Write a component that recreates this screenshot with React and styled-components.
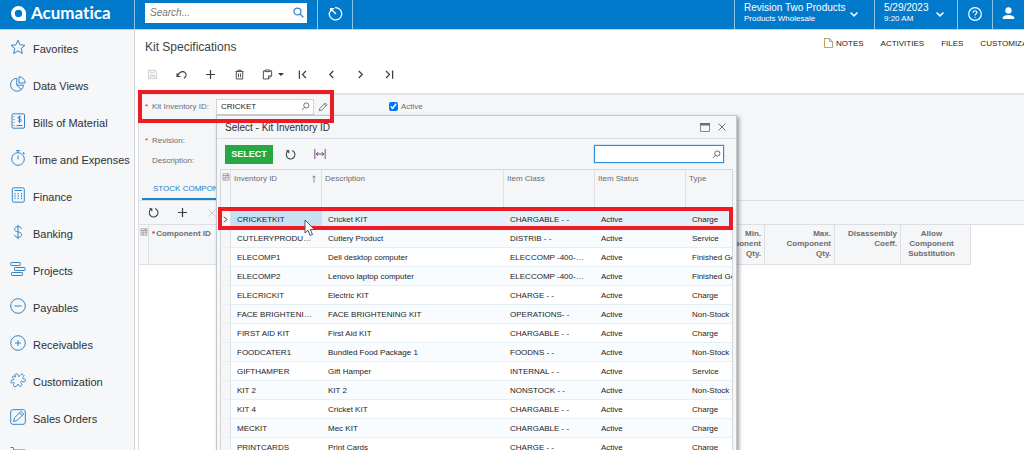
import React from 'react'
import styled, { createGlobalStyle } from 'styled-components'

const menuItems = [
   { label: 'Favorites', icon: 'star' },
   { label: 'Data Views', icon: 'pie' },
   { label: 'Bills of Material', icon: 'bill' },
   { label: 'Time and Expenses', icon: 'timer' },
   { label: 'Finance', icon: 'calculator' },
   { label: 'Banking', icon: 'dollar' },
   { label: 'Projects', icon: 'projects' },
   { label: 'Payables', icon: 'minusCircle' },
   { label: 'Receivables', icon: 'plusCircle' },
   { label: 'Customization', icon: 'puzzle' },
   { label: 'Sales Orders', icon: 'editSquare' },
   { label: '', icon: 'cart' },
]

const kits = [
   ['CRICKETKIT', 'Cricket KIT', 'CHARGABLE - -', 'Active', 'Charge'],
   ['CUTLERYPRODUCT01', 'Cutlery Product', 'DISTRIB - -', 'Active', 'Service'],
   ['ELECOMP1', 'Dell desktop computer', 'ELECCOMP -400-COMP', 'Active', 'Finished Good'],
   ['ELECOMP2', 'Lenovo laptop computer', 'ELECCOMP -400-COMP', 'Active', 'Finished Good'],
   ['ELECRICKIT', 'Electric KIT', 'CHARGE - -', 'Active', 'Charge'],
   ['FACE BRIGHTENING KIT', 'FACE BRIGHTENING KIT', 'OPERATIONS- -', 'Active', 'Non-Stock Item'],
   ['FIRST AID KIT', 'First Aid KIT', 'CHARGABLE - -', 'Active', 'Charge'],
   ['FOODCATER1', 'Bundled Food Package 1', 'FOODNS - -', 'Active', 'Non-Stock Item'],
   ['GIFTHAMPER', 'Gift Hamper', 'INTERNAL - -', 'Active', 'Service'],
   ['KIT 2', 'KIT 2', 'NONSTOCK - -', 'Active', 'Non-Stock Item'],
   ['KIT 4', 'Cricket KIT', 'CHARGABLE - -', 'Active', 'Charge'],
   ['MECKIT', 'Mec KIT', 'CHARGABLE - -', 'Active', 'Charge'],
   ['PRINTCARDS', 'Print Cards', 'CHARGE - -', 'Active', 'Charge'],
]

const shapes = {
   star: <path d="M8 1.2l2 4.6 5 .5-3.800 3.300 1.200 4.900L8 11.900l-4.400 2.600 1.200-4.900L1 6.300l5-.5z" />,
   pie: <><path d="M6.800 2.200A6.500 6.500 0 1 0 13.500 9.200H6.800zM6.800 9.200l4.700 4.600" /><path d="M9 .8A6.200 6.200 0 0 1 15.200 7H9z" /></>,
   bill: (
      <>
         <rect x="2" y=".8" width="12.500" height="14.400" rx="1.200" />
         <path d="M4 3v1M4 6v1M4 9v1M4 12v1M6.500 12.500h6" />
         <path d="M11.200 4.300c-.8-1-3.400-.9-3.400.5 0 1.600 3.600.8 3.600 2.500 0 1.500-2.800 1.600-3.700.4M9.500 2.500v7.500" />
      </>
   ),
   timer: <><circle cx="8" cy="9" r="6.300" /><path d="M8 2.700V.7M6 .7h4M8 5.500v4M12.700 4.300l1.300-1.300M13 2.200l1.800 1.600" /></>,
   calculator: (
      <>
         <rect x="2.300" y=".8" width="12" height="14.400" rx="1.500" />
         <path d="M5 6v7M8.200 6v7M11.500 6v7" strokeDasharray="1.500 .8" />
         <path d="M4.500 3.500h7.600" />
      </>
   ),
   dollar: <><path d="M11.500 5C11 3 9.800 2.700 8 2.700 6 2.700 4.600 3.700 4.600 5.200c0 3.700 7 1.800 7 5.500 0 1.600-1.500 2.600-3.500 2.600S4.700 12.500 4.300 10.700" /><path d="M8 .8v14.400" /></>,
   projects: <><rect x=".8" y="1.500" width="9.500" height="3" rx=".6" /><rect x="4.500" y="6.500" width="10.500" height="3" rx=".6" /><rect x="1.500" y="11.500" width="11" height="3" rx=".6" /></>,
   minusCircle: <><circle cx="8" cy="8" r="7.300" /><path d="M4.300 8h7.400" /></>,
   plusCircle: <><circle cx="8" cy="8" r="7.300" /><path d="M5 8h6M8 5v6" /></>,
   puzzle: <path d="M5.500 5C4 3 6 .8 7.600 2.200c.9.900.2 1.800.9 2.300.8.500 1.700-1.300 2.500-2 1-.8 2.300.1 3.200 1.300-.8 1.200-2 1.500-1.500 2.500.5.800 2 0 2.600 1.200.7 1.600-1 3.300-2.500 2.200-.9-.7-1.500-.9-2 0-.4.900.8 1.500 1.200 2.500.3.900-.7 2-1.800 2.300-1.500-.2-1.100-2.200-2.200-2.200-1 .1-.8 1.600-2 2.300-1.400.7-3-.7-2.400-2.200.3-.8 1-1.300.3-1.900-.8-.5-1.500.6-2.300.6C.8 10.800.7 9.600 1.200 8.700c.8-1.200 2.200-.5 2.500-1.400C4 6.300 2.300 6 2.500 4.800c.5-1.200 2-.7 3 .2z" />,
   editSquare: <><rect x=".7" y=".7" width="14.600" height="14.600" rx="2.200" /><path d="M3.500 12.500l1-3.700 6.500-6.500 2.700 2.700-6.500 6.500zM9.500 3.800l2.700 2.700" /></>,
   cart: <><path d="M.5 1.500h2.800L5.500 10h8L15.300 4H4" /><circle cx="6.500" cy="13.500" r="1.300" /><circle cx="12.500" cy="13.500" r="1.300" /></>,
   search: <><circle cx="6.500" cy="6.500" r="5" /><path d="M10 10l5 5" /></>,
   find: <><circle cx="9.500" cy="6.200" r="4.600" /><path d="M6.200 9.500L1.500 14.200" /></>,
   history: <path d="M7.500 1.700A6.600 6.600 0 1 1 1.800 6M8.500 8.500L3.500 3.500M2.800 6.500V2.800h3.700" />,
   chevronDown: <path d="M2.500 5.500L8 11l5.500-5.500" />,
   help: <><circle cx="8" cy="8" r="7.200" /><path d="M5.800 6.500c0-3 4.400-2.800 4.400-.3C10.200 7.800 8 7.900 8 9.700M8 11v1.300" /></>,
   save: <><path d="M2 2h10l2 2v10H2zM5 2v3.500h6V2M4.500 14V9h7v5M6 11h4" /></>,
   undo: <path d="M1.500 6v5h5M2 10.500C4 6 7 3.500 10.500 3.800c3.500.5 5 4 3.500 7-.5 1-1.500 2-2.500 2.500" />,
   plus: <path d="M8 1.500v13M1.500 8h13" />,
   trash: <path d="M2.200 3.700h11.600M5.700 3.500V1.800h4.600v1.700M3.300 4v10.500h9.400V4M6.500 6.500V12M9.500 6.500V12" />,
   clipboard: <path d="M4.500 2.800H2v11.700h7.500l4.500-4.500V2.800h-2.500M4.500 1.500h7v2.300h-7zM9.500 14.500V10H14" />,
   first: <path d="M3.500 2v12M13 3L8 8l5 5" />,
   last: <path d="M12.500 2v12M3 3l5 5-5 5" />,
   prev: <path d="M10.500 3l-5 5 5 5" />,
   next: <path d="M5.500 3l5 5-5 5" />,
   pencil: <path d="M2 14l1-4L11.500 1.500l3 3L6 13zM9.800 3.200l3 3" />,
   refresh: <path d="M10.500 2.300A6.300 6.300 0 1 1 4.300 3.200M2 2.500h3.500V6" />,
   close: <path d="M2.500 2.500l11 11M13.500 2.500l-11 11" />,
   grid: <path d="M2 1.500h12v13H2zM2 5h12M2 10h12M6.500 5v9M10.500 1.500V10" />,
   up: <path d="M8 15V2M5 5l3-3.500L11 5" />,
}

function Icon({ name, size = 16, weight = 1 }) {
   return (
      <svg width={size} height={size} viewBox="0 0 16 16" fill="none" stroke="currentColor" strokeWidth={weight} aria-hidden="true">
         {shapes[name]}
      </svg>
   )
}

function Header() {
   return (
      <TopBar>
         <Brand href="#home">
            <svg width="15" height="15" viewBox="0 0 16 16" fill="#fff" aria-hidden="true">
               <path fillRule="evenodd" d="M8 0a8 8 0 1 0 0 16h6.500a1.500 1.500 0 0 0 1.500-1.500V8a8 8 0 0 0-8-8zm0 4a3.900 3.900 0 1 1 0 7.800A3.900 3.900 0 0 1 8 4z" />
            </svg>
            Acumatica
         </Brand>
         <SearchCell>
            <SearchBox>
               <input type="text" placeholder="Search..." aria-label="Search" />
               <Icon name="search" size={11} weight={1.800} />
            </SearchBox>
         </SearchCell>
         <BarButton $width={35} aria-label="Recent"><Icon name="history" weight={1.400} size={15} /></BarButton>
         <BarFill />
         <BarMenu $width={140} $end={15}>
            <BarText>
               <b>Revision Two Products</b>
               <span>Products Wholesale</span>
            </BarText>
            <Icon name="chevronDown" size={10} weight={2.400} />
         </BarMenu>
         <BarMenu $width={83} $end={12}>
            <BarText>
               <b>5/29/2023</b>
               <span>9:20 AM</span>
            </BarText>
            <Icon name="chevronDown" size={10} weight={2.400} />
         </BarMenu>
         <BarButton $width={35} aria-label="Help"><Icon name="help" size={14} weight={1.400} /></BarButton>
         <BarButton $width={32} aria-label="User">
            <svg width="13" height="13" viewBox="0 0 14 14" fill="#fff" aria-hidden="true">
               <circle cx="7" cy="3.800" r="3.400" />
               <path d="M.8 13v-1.700C1 9.500 3.800 8.600 7 8.600s6 .9 6.200 2.700V13z" />
            </svg>
         </BarButton>
      </TopBar>
   )
}

function KitDialog() {
   return (
      <Dialog role="dialog" aria-labelledby="dialog-title">
         <DialogTitle>
            <h2 id="dialog-title">Select - Kit Inventory ID</h2>
            <ToolButton aria-label="Maximize">
               <svg width="10" height="9" viewBox="0 0 10 9" aria-hidden="true">
                  <path d="M.5 1h9v7.500h-9z" fill="none" stroke="#85888c" />
                  <path d="M0 0h10v2.500H0z" fill="#6b6e72" />
               </svg>
            </ToolButton>
            <ToolButton aria-label="Close"><Icon name="close" size={10} weight={1.600} /></ToolButton>
         </DialogTitle>
         <DialogTools>
            <SelectButton>SELECT</SelectButton>
            <ToolButton aria-label="Refresh" $dark><Icon name="refresh" size={11} weight={1.500} /></ToolButton>
            <ToolButton aria-label="Fit to screen" $dark>
               <svg width="12" height="10" viewBox="0 0 12 10" fill="none" aria-hidden="true">
                  <path d="M.8 0v10M11.200 0v10" stroke="#9b5fa8" strokeWidth="1.200" />
                  <path d="M2 5h8M4 3.200L2.200 5 4 6.800M8 3.200L9.800 5 8 6.800" stroke="#55585c" />
               </svg>
            </ToolButton>
            <Spacer />
            <DialogSearch>
               <input type="text" aria-label="Find kit" />
               <Icon name="find" size={9} weight={1.600} />
            </DialogSearch>
         </DialogTools>
         <GridFrame>
            <KitTable>
               <colgroup>
                  <Col $w={10} />
                  <Col $w={91} />
                  <Col $w={182} />
                  <Col $w={91} />
                  <Col $w={91} />
                  <Col $w={91} />
               </colgroup>
               <thead>
                  <tr>
                     <th aria-label="Settings"><Icon name="grid" size={8} /></th>
                     <th><Sorted>Inventory ID <Icon name="up" size={8} weight={1.500} /></Sorted></th>
                     <th>Description</th>
                     <th>Item Class</th>
                     <th>Item Status</th>
                     <th>Type</th>
                  </tr>
               </thead>
               <tbody>
                  {kits.map((kit, i) => (
                     <KitRow key={kit[0]} $selected={i === 0}>
                        <td>{i === 0 && <Icon name="next" size={9} weight={1.600} />}</td>
                        {kit.map((value, n) => <td key={n}>{value}</td>)}
                     </KitRow>
                  ))}
               </tbody>
            </KitTable>
         </GridFrame>
         <RowMark />
         <Pointer width="12" height="18" viewBox="0 0 12 18" aria-hidden="true">
            <path d="M1 1v13l3-2.700L6 16.500l2.500-1L6.300 10.500H10.500z" fill="#fff" stroke="#555" />
         </Pointer>
      </Dialog>
   )
}

function App() {
   return (
      <Page>
         <GlobalStyle />
         <Header />
         <Body>
            <Sidebar>
               {menuItems.map(item => (
                  <SideLink href="#menu" key={item.icon} aria-label={item.label || 'Purchases'}>
                     <Icon name={item.icon} />
                     {item.label}
                  </SideLink>
               ))}
            </Sidebar>
            <Main>
               <TitleRow>
                  <h1>Kit Specifications</h1>
                  <PageLinks>
                     <a href="#notes">
                        <svg width="9" height="10" viewBox="0 0 9 10" fill="none" aria-hidden="true">
                           <path d="M.5 9.500V.5h5L8.500 3.500v6z" stroke="#a9a49a" />
                           <path d="M.5 0v9.500M5.500.5v3h3" stroke="#c7a05a" />
                        </svg>
                        NOTES
                     </a>
                     <a href="#activities">ACTIVITIES</a>
                     <a href="#files">FILES</a>
                     <a href="#customization">CUSTOMIZATION</a>
                  </PageLinks>
               </TitleRow>
               <Toolbar>
                  <ToolButton aria-label="Save" disabled><Icon name="save" size={11} weight={1.200} /></ToolButton>
                  <ToolButton aria-label="Undo" $dark><Icon name="undo" size={11} weight={1.600} /></ToolButton>
                  <ToolButton aria-label="Add" $dark><Icon name="plus" size={11} weight={1.800} /></ToolButton>
                  <ToolButton aria-label="Delete" $dark><Icon name="trash" size={11} weight={1.300} /></ToolButton>
                  <ClipboardButton aria-label="Clipboard" $dark>
                     <Icon name="clipboard" size={11} weight={1.300} />
                     <Caret />
                  </ClipboardButton>
                  <ToolButton aria-label="First" $dark><Icon name="first" size={11} weight={1.800} /></ToolButton>
                  <ToolButton aria-label="Previous" $dark><Icon name="prev" size={11} weight={1.800} /></ToolButton>
                  <ToolButton aria-label="Next" $dark><Icon name="next" size={11} weight={1.800} /></ToolButton>
                  <ToolButton aria-label="Last" $dark><Icon name="last" size={11} weight={1.800} /></ToolButton>
               </Toolbar>
               <Content>
                  <Form>
                     <KitField>
                        <Label htmlFor="kit" $required>Kit Inventory ID:</Label>
                        <Lookup>
                           <input id="kit" type="text" defaultValue="CRICKET" />
                           <Icon name="find" size={9} weight={1.500} />
                        </Lookup>
                        <ToolButton aria-label="Edit"><Icon name="pencil" size={10} weight={1.400} /></ToolButton>
                        <FieldMark />
                     </KitField>
                     <ActiveLabel>
                        <input type="checkbox" defaultChecked />
                        Active
                     </ActiveLabel>
                     <Label as="span" $required>Revision:</Label>
                     <Label as="span">Description:</Label>
                  </Form>
                  <Tabs>
                     <button>STOCK COMPONENTS</button>
                  </Tabs>
                  <GridTools>
                     <ToolButton aria-label="Refresh" $dark><Icon name="refresh" size={11} weight={1.500} /></ToolButton>
                     <ToolButton aria-label="Add row" $dark><Icon name="plus" size={11} weight={1.800} /></ToolButton>
                     <ToolButton aria-label="Delete row" disabled><Icon name="close" size={10} weight={1.400} /></ToolButton>
                  </GridTools>
                  <ComponentTable>
                     <colgroup>
                        <Col $w={10} />
                        <Col $w={550} />
                        <Col $w={66} />
                        <Col $w={70} />
                        <Col $w={66} />
                        <Col $w={70} />
                     </colgroup>
                     <thead>
                        <tr>
                           <th aria-label="Settings"><Icon name="grid" size={8} /></th>
                           <th><i>*</i>Component ID</th>
                           <Num>Min. Component Qty.</Num>
                           <Num>Max.<br />Component<br />Qty.</Num>
                           <Num>Disassembly Coeff.</Num>
                           <Mid>Allow Component Substitution</Mid>
                        </tr>
                     </thead>
                  </ComponentTable>
               </Content>
               <KitDialog />
            </Main>
         </Body>
      </Page>
   )
}

const GlobalStyle = createGlobalStyle`
   * {
      box-sizing: border-box;
   }

   body {
      margin: 0;
      overflow: hidden;
      background: #fff;
      color: #3c3f43;
      font-family: 'Liberation Sans', Arial, sans-serif;
      font-size: 8px;
   }

   button, input {
      font: inherit;
      color: inherit;
      margin: 0;
      padding: 0;
      border: 0;
      background: none;
   }

   input {
      outline: none;
      min-width: 0;
   }

   a {
      color: inherit;
      text-decoration: none;
   }

   h1, h2 {
      margin: 0;
      font-weight: 400;
   }

   svg {
      flex: none;
      display: block;
   }
`

const Page = styled.div`
   display: flex;
   flex-direction: column;
   height: 100vh;
   overflow: hidden;
`

const TopBar = styled.header`
   display: flex;
   flex: none;
   height: 30px;
   background: #027acc;
   border-bottom: 1px solid #b9d3e8;
   color: #fff;
`

const Brand = styled.a`
   display: flex;
   align-items: center;
   gap: 5px;
   width: 134px;
   padding: 0 0 3px 11px;
   font-family: Lato, 'Open Sans', sans-serif;
   font-size: 17px;
   font-weight: 700;
   font-variant-ligatures: none;
   line-height: 24px;
`

const SearchCell = styled.div`
   width: 183px;
   padding: 3px 10px;
   border-left: 1px solid #8fc3e8;
`

const SearchBox = styled.div`
   display: flex;
   align-items: center;
   height: 20px;
   padding: 0 3px 2px 5px;
   background: #fff;
   color: #2f83c9;

   input {
      flex: 1;
      font-size: 10px;
      font-style: italic;
   }

   input::placeholder {
      color: #777;
   }
`

const BarButton = styled.button`
   display: flex;
   flex: none;
   align-items: center;
   justify-content: center;
   width: ${props => props.$width}px;
   padding-bottom: 2px;
   border-left: 1px solid #8fc3e8;
`

const BarMenu = styled(BarButton)`
   justify-content: space-between;
   padding: 0 ${props => props.$end}px 2px 9px;
`

const BarText = styled.span`
   display: flex;
   flex-direction: column;
   text-align: left;
   line-height: 11px;
   padding-bottom: 2px;

   b {
      font-size: 10px;
      font-weight: 400;
   }
`

const Spacer = styled.div`
   flex: 1;
`

const BarFill = styled(Spacer)`
   border-left: 1px solid #8fc3e8;
`

const Body = styled.div`
   display: flex;
   flex: 1;
   min-height: 0;
`

const Sidebar = styled.nav`
   flex: none;
   width: 135px;
   overflow: hidden;
   background: #f5f7f9;
   border-right: 1px solid #d3d5d8;
`

const SideLink = styled.a`
   display: flex;
   align-items: center;
   gap: 7px;
   height: 37px;
   padding-left: 10px;
   color: #2e3134;
   font-size: 11px;
   white-space: nowrap;

   svg {
      color: #3485c8;
      margin-bottom: 3px;
   }
`

const Main = styled.main`
   position: relative;
   display: flex;
   flex: 1;
   flex-direction: column;
   min-width: 0;
`

const TitleRow = styled.div`
   display: flex;
   justify-content: space-between;
   align-items: center;
   height: 33px;
   padding-left: 10px;

   h1 {
      font-size: 12px;
   }
`

const PageLinks = styled.div`
   display: flex;
   flex: none;
   gap: 17px;
   width: 200px;
   padding-bottom: 7px;
   overflow: hidden;
   color: #222;

   a {
      display: flex;
      align-items: center;
      gap: 3px;
   }
`

const Toolbar = styled.div`
   display: flex;
   align-items: center;
   gap: 6px;
   height: 30px;
   padding: 0 0 7px 6px;
`

const ToolButton = styled.button`
   display: flex;
   flex: none;
   align-items: center;
   justify-content: center;
   width: 23px;
   height: 20px;
   color: ${props => props.$dark ? '#3a3d40' : '#6f7276'};

   &:disabled {
      color: #c5c7ca;
   }
`

const ClipboardButton = styled(ToolButton)`
   justify-content: flex-start;
   gap: 5px;
   width: 28px;
   padding-left: 5px;
`

const Caret = styled.span`
   border: 3px solid transparent;
   border-top-color: #3a3d40;
   border-bottom: 0;
`

const Content = styled.div`
   flex: 1;
   min-height: 0;
   margin-left: 3px;
   border-top: 2px solid #e2e4e7;
   border-left: 1px solid #dcdee1;
`

const Form = styled.form`
   display: grid;
   grid-template-columns: 250px 1fr;
   grid-template-rows: 23px 29px 20px;
   align-items: center;
   height: 85px;
   background: #f5f6f8;

   > :nth-child(n + 3) {
      grid-column: 1 / 3;
      align-self: end;
      line-height: 12px;
   }
`

const KitField = styled.div`
   position: relative;
   display: flex;
   align-items: center;
   height: 23px;
`

const Label = styled.label`
   width: 77px;
   padding-left: 13px;
   color: #6c7075;
   white-space: nowrap;

   &::before {
      content: ${props => props.$required ? "'*'" : "''"};
      display: inline-block;
      width: 7px;
      margin-left: -7px;
      color: #e0242b;
   }
`

const Lookup = styled.div`
   display: flex;
   align-items: center;
   width: 98px;
   height: 16px;
   padding: 0 3px 0 4px;
   background: #fff;
   border: 1px solid #d0d3d6;
   color: #55585c;

   input {
      flex: 1;
      width: 20px;
      color: #222;
   }

   & + button {
      width: 18px;
   }
`

const FieldMark = styled.div`
   position: absolute;
   top: -5px;
   left: -1px;
   width: 196px;
   height: 33px;
   border: 4px solid #ed1c24;
   pointer-events: none;
   z-index: 3;
`

const ActiveLabel = styled.label`
   display: flex;
   align-items: center;
   gap: 3px;
   color: #6c7075;

   input {
      width: 9px;
      height: 9px;
   }
`

const Tabs = styled.div`
   display: flex;
   height: 21px;
   padding-left: 3px;
   background: #f5f6f8;
   border-bottom: 1px solid #dcdee1;

   button {
      width: 110px;
      padding: 0 11px 2px;
      border-bottom: 2px solid #1a83cf;
      color: #1a83cf;
      text-align: left;
      white-space: nowrap;
   }
`

const GridTools = styled.div`
   display: flex;
   align-items: center;
   gap: 6px;
   height: 24px;
   padding-left: 3px;
   background: #f5f6f8;
   border-bottom: 1px solid #dcdee1;
`

const Col = styled.col`
   width: ${props => props.$w}px;
`

const Table = styled.table`
   table-layout: fixed;
   border-collapse: separate;
   border-spacing: 0;

   th {
      height: 40px;
      padding: 4px 3px 0;
      background: #f5f6f8;
      border-right: 1px solid #dee0e3;
      color: #6a6d71;
      font-weight: 400;
      line-height: 10px;
      text-align: left;
      vertical-align: top;
   }

   th:first-child {
      padding: 3px 1px;
   }
`

const ComponentTable = styled(Table)`
   width: 832px;

   th {
      border-bottom: 1px solid #dee0e3;
      font-weight: 700;
   }

   i {
      margin-right: 1px;
      color: #e0242b;
      font-style: normal;
   }
`

const Num = styled.th`
   && {
      text-align: right;
   }
`

const Mid = styled.th`
   && {
      padding: 4px 14px 0 6px;
      text-align: center;
   }
`

const Dialog = styled.section`
   position: absolute;
   top: 85px;
   left: 81px;
   bottom: -20px;
   width: 521px;
   display: flex;
   flex-direction: column;
   background: #f5f6f8;
   border: 1px solid #c3c6ca;
   box-shadow: 2px 2px 4px rgba(0, 0, 0, 0.4);
   z-index: 2;
`

const DialogTitle = styled.header`
   display: flex;
   flex: none;
   align-items: center;
   height: 23px;
   padding: 0 6px 0 8px;
   border-bottom: 1px solid #dcdee1;

   h2 {
      flex: 1;
      color: #2a2d30;
      font-size: 10px;
   }

   button {
      width: 17px;
   }
`

const DialogTools = styled.div`
   display: flex;
   flex: none;
   align-items: center;
   gap: 6px;
   height: 30px;
   padding: 0 12px 0 8px;
`

const SelectButton = styled.button`
   width: 48px;
   height: 19px;
   background: #28a745;
   color: #fff;
   font-size: 9px;
   font-weight: 700;
`

const DialogSearch = styled.div`
   display: flex;
   align-items: center;
   width: 130px;
   height: 18px;
   padding: 0 2px;
   background: #fff;
   border: 1px solid #2e8fd8;
   box-shadow: 0 0 1px #2e8fd8;
   color: #55585c;

   input {
      flex: 1;
   }
`

const GridFrame = styled.div`
   flex: 1;
   min-height: 0;
   margin: 0 3px;
   overflow: hidden;
   background: #fff;
   border: 1px solid #d5d8db;
`

const KitTable = styled(Table)`
   width: 556px;

   td {
      height: 19px;
      padding: 0 6px;
      border-bottom: 1px solid #e6eff4;
      color: #1f2225;
      overflow: hidden;
      white-space: nowrap;
      text-overflow: ellipsis;
   }

   td:first-child {
      padding: 0;
      background: #f5f6f8;
      border-right: 1px solid #dee0e3;
      text-overflow: clip;
   }
`

const KitRow = styled.tr`
   background: ${props => props.$selected ? '#e4f1fa' : '#fff'};

   &:nth-child(even) {
      background: #f8fcfe;
   }

   td:nth-child(2) {
      background: ${props => props.$selected ? '#c6e1f3' : 'transparent'};
   }
`

const Sorted = styled.span`
   display: flex;
   justify-content: space-between;
   align-items: center;
`

const RowMark = styled.div`
   position: absolute;
   top: 91px;
   left: 1px;
   width: 515px;
   height: 23px;
   border: 4px solid #ed1c24;
   pointer-events: none;
`

const Pointer = styled.svg`
   position: absolute;
   top: 103px;
   left: 87px;
`

export default App
